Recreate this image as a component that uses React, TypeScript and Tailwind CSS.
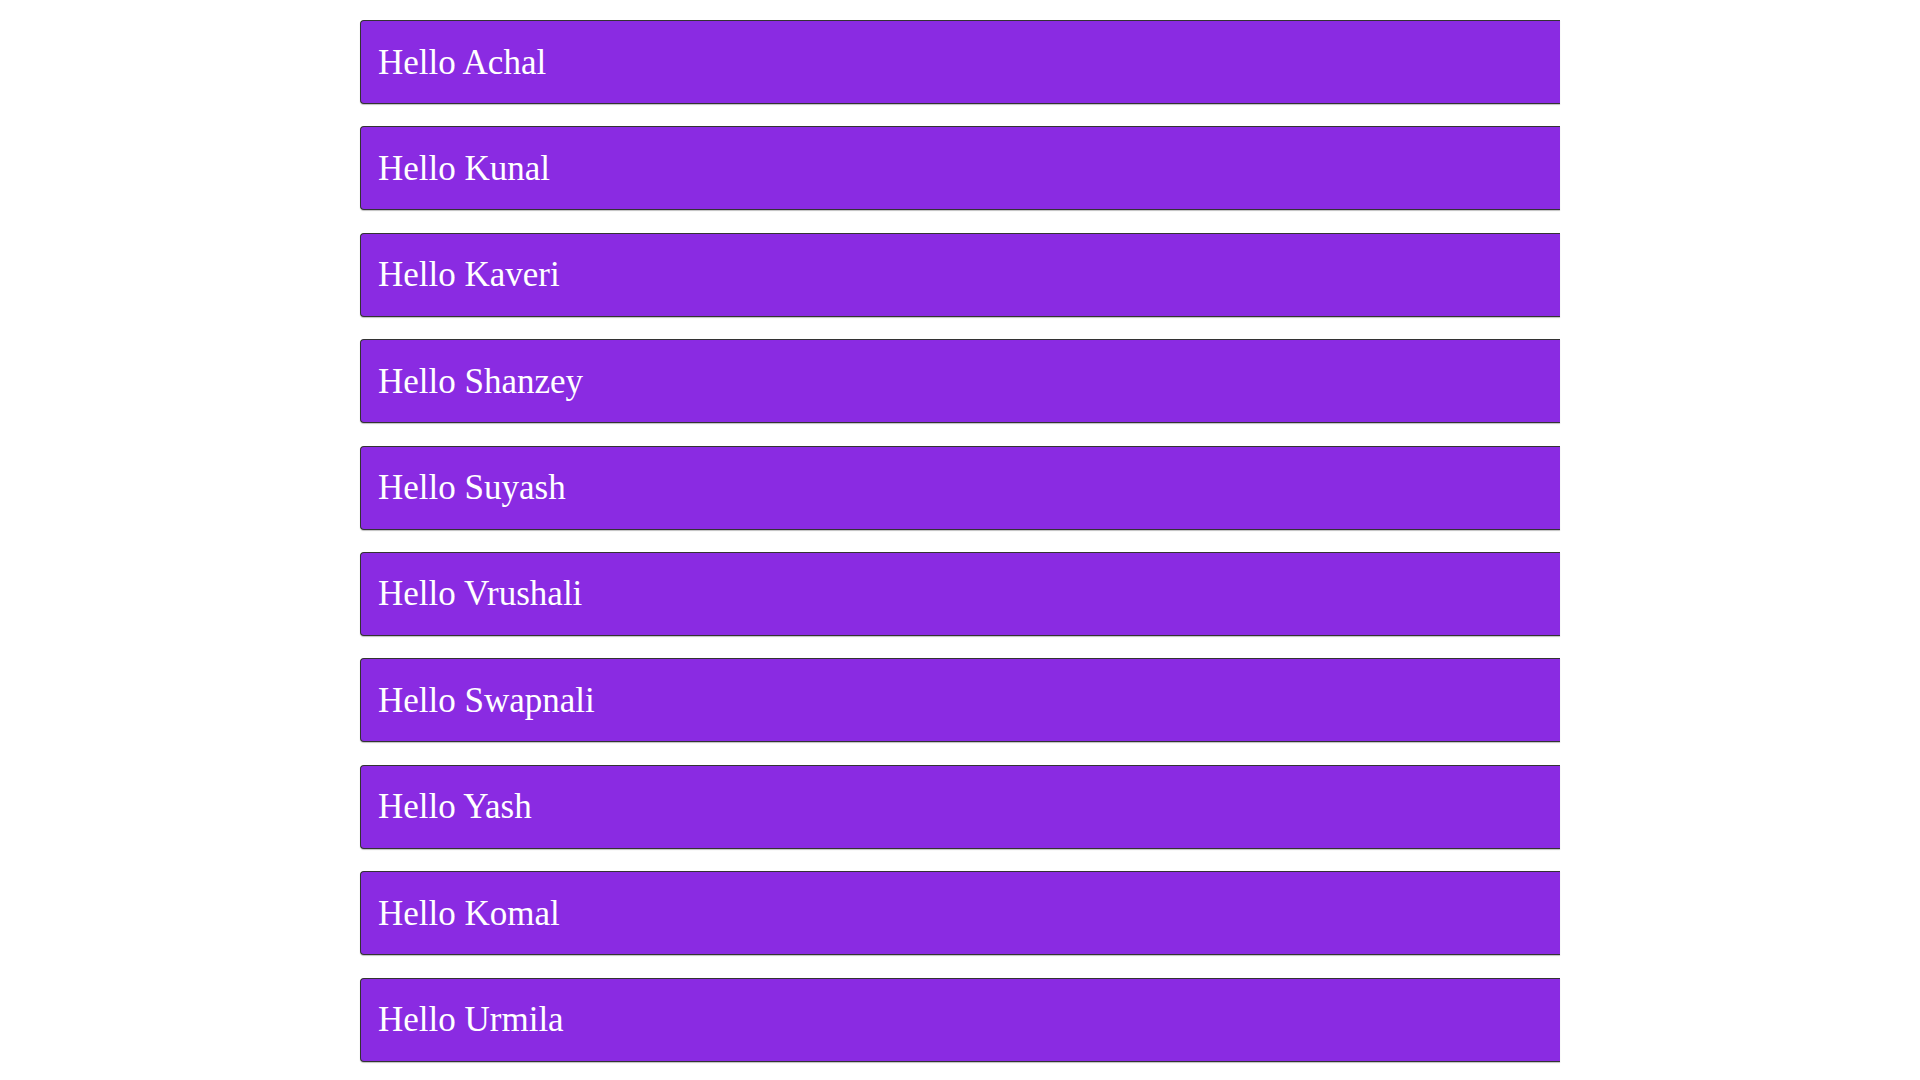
const names = [
  "Achal",
  "Kunal",
  "Kaveri",
  "Shanzey",
  "Suyash",
  "Vrushali",
  "Swapnali",
  "Yash",
  "Komal",
  "Urmila",
];

export default function App() {
  return (
    <div className="min-h-screen bg-white pt-[20px]">
      <div className="w-[1200px] mx-auto flex flex-col gap-[22.4px]">
        {names.map((name) => (
          <div
            key={name}
            className="h-[84px] flex items-center pl-[17px] bg-[#8a2be2] border-y border-l border-[#333] rounded-l-[4px] shadow-[0_1px_1px_rgba(0,0,0,0.25)]"
          >
            <span className="text-[35px] text-white leading-none font-['Liberation_Serif',serif]">
              Hello {name}
            </span>
          </div>
        ))}
      </div>
    </div>
  );
}
